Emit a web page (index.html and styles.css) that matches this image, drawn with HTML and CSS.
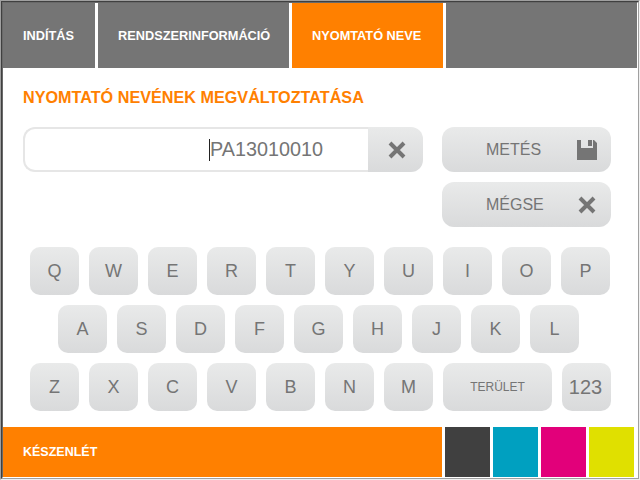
FILE: index.html
```html
<!DOCTYPE html>
<html lang="hu">

<head>
    <meta charset="UTF-8">
    <meta name="viewport" content="width=device-width, initial-scale=1.0">
    <title>Nyomtató neve</title>
    <link rel="stylesheet" href="styles.css">
</head>

<body>
    <div class="frame">
        <div class="frame-inner">
            <div class="screen">
                <div class="tab-container">
                    <div class="tab tab-start">INDÍTÁS</div>
                    <div class="tab tab-info">RENDSZERINFORMÁCIÓ</div>
                    <div class="tab tab-name active">NYOMTATÓ NEVE</div>
                    <div class="tab tab-rest"></div>
                </div>

                <div class="content">
                    <h1>NYOMTATÓ NEVÉNEK MEGVÁLTOZTATÁSA</h1>

                    <div class="form">
                        <div class="name-input">
                            <div class="name-field"><span class="cursor"></span>PA13010010</div>
                            <div class="name-clear">
                                <svg class="icon-x" width="18" height="18" viewBox="0 0 18 18">
                                    <path d="M2 2L16 16M16 2L2 16"></path>
                                </svg>
                            </div>
                        </div>
                        <div class="actions">
                            <div class="action">
                                <span class="action-label">METÉS</span>
                                <svg class="icon-save" width="20" height="20" viewBox="0 0 20 20">
                                    <path d="M0 0H4V8H16V0H17L20 3V20H0Z"></path>
                                    <rect x="11" y="0" width="4" height="6"></rect>
                                </svg>
                            </div>
                            <div class="action">
                                <span class="action-label">MÉGSE</span>
                                <svg class="icon-x icon-cancel" width="18" height="18" viewBox="0 0 18 18">
                                    <path d="M2 2L16 16M16 2L2 16"></path>
                                </svg>
                            </div>
                        </div>
                    </div>

                    <div class="keyboard">
                        <div class="key-row">
                            <div class="key">Q</div>
                            <div class="key">W</div>
                            <div class="key">E</div>
                            <div class="key">R</div>
                            <div class="key">T</div>
                            <div class="key">Y</div>
                            <div class="key">U</div>
                            <div class="key">I</div>
                            <div class="key">O</div>
                            <div class="key">P</div>
                        </div>
                        <div class="key-row key-row-middle">
                            <div class="key">A</div>
                            <div class="key">S</div>
                            <div class="key">D</div>
                            <div class="key">F</div>
                            <div class="key">G</div>
                            <div class="key">H</div>
                            <div class="key">J</div>
                            <div class="key">K</div>
                            <div class="key">L</div>
                        </div>
                        <div class="key-row">
                            <div class="key">Z</div>
                            <div class="key">X</div>
                            <div class="key">C</div>
                            <div class="key">V</div>
                            <div class="key">B</div>
                            <div class="key">N</div>
                            <div class="key">M</div>
                            <div class="key key-space">TERÜLET</div>
                            <div class="key key-num">123</div>
                        </div>
                    </div>
                </div>

                <div class="status-bar">
                    <div class="status-text">KÉSZENLÉT</div>
                    <div class="ink ink-black"></div>
                    <div class="ink ink-cyan"></div>
                    <div class="ink ink-magenta"></div>
                    <div class="ink ink-yellow"></div>
                </div>
            </div>
        </div>
    </div>
</body>

</html>
```

FILE: styles.css
```css
* {
    box-sizing: border-box;
}

body {
    margin: 0;
    font-family: "Liberation Sans", Arial, sans-serif;
    background-color: #fff;
}

.frame {
    width: 640px;
    height: 480px;
    border: 1px solid;
    border-color: #a0a0a0 #f0f0f0 #f0f0f0 #a0a0a0;
}

.frame-inner {
    height: 100%;
    border: 1px solid;
    border-color: #404040 #a0a0a0 #a0a0a0 #404040;
}

.screen {
    display: flex;
    flex-direction: column;
    height: 100%;
    border: 1px solid;
    border-color: #696969 #fff #fff #696969;
    background-color: #fff;
}

.tab-container {
    display: flex;
    gap: 3px;
    height: 65px;
}

.tab {
    display: flex;
    align-items: center;
    padding-left: 20px;
    background-color: #757575;
    color: #fff;
    font-size: 12.75px;
    font-weight: bold;
}

.tab-start {
    width: 92px;
}

.tab-info {
    width: 191px;
}

.tab-name {
    width: 151px;
}

.tab-rest {
    flex: 1;
}

.tab.active {
    background-color: #ff8000;
}

.content {
    flex: 1;
    padding: 0 20px;
}

h1 {
    margin: 21px 0 0;
    color: #ff8000;
    font-size: 16.2px;
    line-height: 17px;
    font-weight: bold;
}

.form {
    display: flex;
    justify-content: space-between;
    width: 588px;
    margin-top: 21px;
}

.name-input {
    display: flex;
    width: 400px;
    height: 45px;
}

.name-field {
    display: flex;
    align-items: center;
    width: 345px;
    padding-left: 184px;
    border: 2px solid #e6e6e6;
    border-right: none;
    border-radius: 12px 0 0 12px;
    color: #757575;
    font-size: 19.8px;
}

.cursor {
    width: 1px;
    height: 22px;
    background-color: #222;
}

.name-clear {
    display: flex;
    align-items: center;
    justify-content: center;
    flex: 1;
    padding-left: 2px;
    border-radius: 0 12px 12px 0;
    background: linear-gradient(#e9eaea, #d9dadb);
}

.icon-x path {
    fill: none;
    stroke: #757575;
    stroke-width: 4;
}

.icon-cancel {
    margin-right: 1px;
}

.icon-save {
    fill: #757575;
}

.actions {
    display: flex;
    flex-direction: column;
    gap: 10px;
    width: 169px;
}

.action {
    display: flex;
    align-items: center;
    justify-content: space-between;
    height: 45px;
    padding: 0 14px 0 44px;
    border-radius: 12px;
    background: linear-gradient(#e9eaea, #d9dadb);
    color: #757575;
    font-size: 16px;
}

.keyboard {
    display: flex;
    flex-direction: column;
    gap: 10px;
    margin-top: 20px;
    padding-left: 7px;
}

.key-row {
    display: flex;
    gap: 10px;
}

.key-row-middle {
    padding-left: 28px;
}

.key {
    display: flex;
    align-items: center;
    justify-content: center;
    width: 49px;
    height: 48px;
    border-radius: 10px;
    background: linear-gradient(#e9eaea, #d9dadb);
    color: #757575;
    font-size: 18px;
}

.key-space {
    width: 109px;
    font-size: 12px;
}

.key-num {
    padding-right: 2px;
    font-size: 20px;
}

.status-bar {
    display: flex;
    gap: 3px;
    height: 50px;
}

.status-text {
    display: flex;
    align-items: center;
    width: 439px;
    padding-left: 20px;
    background-color: #ff8000;
    color: #fff;
    font-size: 12.5px;
    font-weight: bold;
}

.ink {
    width: 45px;
}

.ink-black {
    background-color: #404040;
}

.ink-cyan {
    background-color: #00a0c0;
}

.ink-magenta {
    background-color: #e2007a;
}

.ink-yellow {
    background-color: #e0e000;
}
```
